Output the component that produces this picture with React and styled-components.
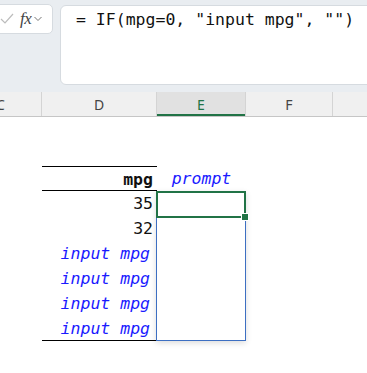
import React from 'react';
import styled, { createGlobalStyle } from 'styled-components';

const Global = createGlobalStyle`
	html, body {
		margin: 0;
		padding: 0;
		background: #ffffff;
		overflow: hidden;
	}
`;

const Page = styled.div`
	width: 367px;
	height: 373px;
	overflow: hidden;
	background: #ffffff;
	font-family: 'DejaVu Sans Mono', monospace;
`;

const Ribbon = styled.div`
	height: 92px;
	background: #e9edf1;
	display: flex;
	align-items: flex-start;
	gap: 7px;
	box-sizing: border-box;
	padding-top: 4px;
`;

const NameBox = styled.div`
	width: 60px;
	height: 30px;
	margin-left: -7px;
	box-sizing: border-box;
	background: #ffffff;
	border: 1px solid #d6dbe0;
	border-radius: 5px;
	display: flex;
	align-items: center;
	padding-left: 6px;
	gap: 6px;
`;

const Fx = styled.span`
	font-family: 'Liberation Serif', serif;
	font-style: italic;
	font-size: 17px;
	color: #444;
	letter-spacing: -0.5px;
`;

const FormulaBox = styled.div`
	flex: 1;
	height: 80px;
	margin-top: 1px;
	margin-right: -10px;
	box-sizing: border-box;
	background: #ffffff;
	border: 1px solid #d6dbe0;
	border-radius: 6px;
	padding: 3px 0 0 15px;
	font-size: 16.5px;
	line-height: 22px;
	color: #111;
	white-space: pre;
`;

const HeaderRow = styled.div`
	display: flex;
	height: 25px;
	background: #f0f0f0;
	border-bottom: 1px solid #c6c6c6;
	box-sizing: border-box;
	overflow: hidden;
`;

const ColHead = styled.div`
	width: ${p => p.w}px;
	flex-shrink: 0;
	box-sizing: border-box;
	border-right: 1px solid #d4d4d4;
	display: flex;
	align-items: center;
	justify-content: ${p => (p.cut ? 'flex-start' : 'center')};
	text-indent: ${p => (p.cut ? '-4px' : '0')};
	font-family: 'Noto Sans', sans-serif;
	font-size: 14px;
	color: ${p => (p.active ? '#217346' : '#444')};
	background: ${p => (p.active ? '#e1e1e1' : 'transparent')};
	box-shadow: ${p => (p.active ? 'inset 0 -2px 0 #217346' : 'none')};
	overflow: hidden;
`;

const Sheet = styled.div`
	display: flex;
	padding-top: 49px;
	padding-left: 42px;
`;

const DCol = styled.div`
	width: 115px;
	display: flex;
	flex-direction: column;
`;

const ECol = styled.div`
	width: 89px;
	display: flex;
	flex-direction: column;
`;

const Cell = styled.div`
	height: 25px;
	box-sizing: border-box;
	font-size: 16.5px;
	line-height: 25px;
	white-space: pre;
	text-align: ${p => p.align || 'right'};
	padding-right: ${p => (p.align === 'center' ? 0 : p.blue ? 7 : 4)}px;
	font-weight: ${p => (p.bold ? 700 : 400)};
	font-style: ${p => (p.blue ? 'italic' : 'normal')};
	color: ${p => (p.blue ? '#1a1aff' : '#111')};
	border-top: ${p => (p.top ? '1px solid #000' : 'none')};
	border-bottom: ${p => (p.bottom ? '1px solid #000' : 'none')};
`;

const Block = styled.div`
	height: 150px;
	box-sizing: border-box;
	border: 1px solid #3d6fc2;
	border-top: none;
	box-shadow: 0 2px 6px rgba(0, 0, 0, 0.14);
	position: relative;
	margin-left: -1px;
	width: 90px;
`;

const Selected = styled.div`
	height: 27px;
	margin: 0 -1px 0 -1px;
	box-sizing: border-box;
	border: 2px solid #217346;
	position: relative;
`;

const Handle = styled.span`
	position: absolute;
	right: -5px;
	bottom: -5px;
	width: 6px;
	height: 6px;
	background: #217346;
	border: 1px solid #ffffff;
`;

const rows = ['35', '32', 'input mpg', 'input mpg', 'input mpg', 'input mpg'];

export default function App() {
	return (
		<Page>
			<Global />
			<Ribbon>
				<NameBox>
					<svg width="14" height="12" viewBox="0 0 14 12">
						<path d="M1 6 L5 10 L13 1" fill="none" stroke="#bcbcbc" strokeWidth="1.2" />
					</svg>
					<Fx>fx</Fx>
					<svg width="8" height="6" viewBox="0 0 8 6" style={{ marginLeft: -3 }}>
						<path d="M0.5 1 L4 4.5 L7.5 1" fill="none" stroke="#777" strokeWidth="1" />
					</svg>
				</NameBox>
				<FormulaBox>{'= IF(mpg=0, "input mpg", "")'}</FormulaBox>
			</Ribbon>
			<HeaderRow>
				<ColHead w={42} cut>C</ColHead>
				<ColHead w={115}>D</ColHead>
				<ColHead w={89} active>E</ColHead>
				<ColHead w={87}>F</ColHead>
				<ColHead w={40} />
			</HeaderRow>
			<Sheet>
				<DCol>
					<Cell top bottom bold>mpg</Cell>
					{rows.map((r, i) => (
						<Cell key={i} blue={r !== '35' && r !== '32'} bottom={i === rows.length - 1}>
							{r}
						</Cell>
					))}
				</DCol>
				<ECol>
					<Cell blue align="center">prompt</Cell>
					<Block>
						<Selected>
							<Handle />
						</Selected>
					</Block>
				</ECol>
			</Sheet>
		</Page>
	);
}
